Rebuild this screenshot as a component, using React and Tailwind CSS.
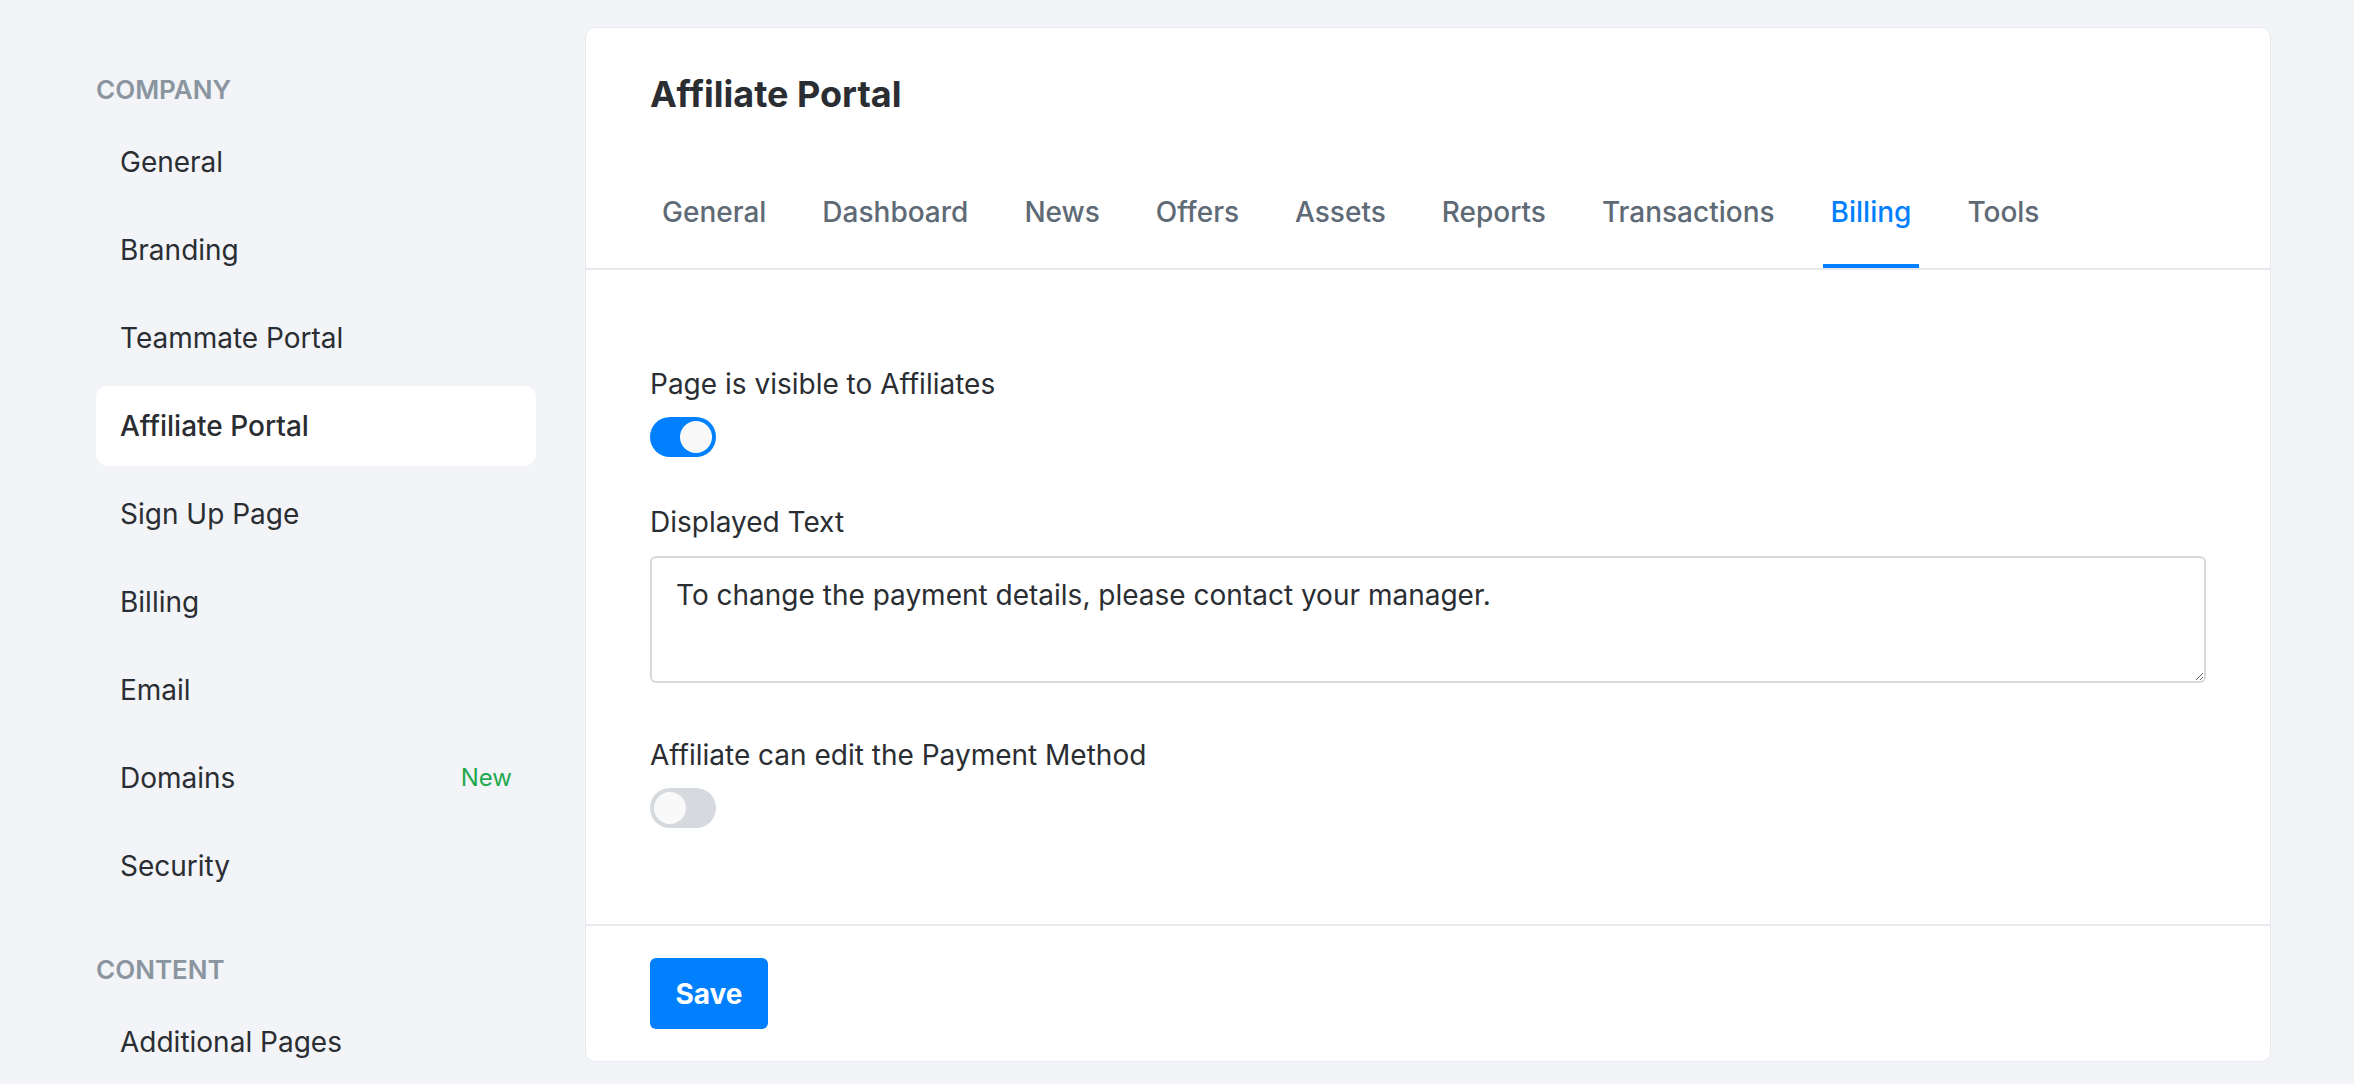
import React from "react";

const company = [
  { label: "General" },
  { label: "Branding" },
  { label: "Teammate Portal" },
  { label: "Affiliate Portal", active: true },
  { label: "Sign Up Page" },
  { label: "Billing" },
  { label: "Email" },
  { label: "Domains", badge: "New" },
  { label: "Security" },
];

const content = [{ label: "Additional Pages" }];

const tabs = ["General", "Dashboard", "News", "Offers", "Assets", "Reports", "Transactions", "Billing", "Tools"];

function NavItem({ item }) {
  return (
    <div
      className={
        "h-[80px] px-[24px] rounded-[12px] flex items-center justify-between text-[28px] leading-[32px] text-[#2a2e33] " +
        (item.active ? "bg-white font-medium" : "")
      }
    >
      <span>{item.label}</span>
      {item.badge && <span className="text-[24px] text-[#22a94f]">{item.badge}</span>}
    </div>
  );
}

function Toggle({ on }) {
  return (
    <div
      className={
        "w-[66px] h-[40px] rounded-full p-[4px] flex " +
        (on ? "bg-[#0080ff] justify-end" : "bg-[#d6dade] justify-start")
      }
    >
      <div className="w-[32px] h-[32px] rounded-full bg-[#f9f9f9]" />
    </div>
  );
}

export default function App() {
  return (
    <div
      className="w-full h-[1084px] bg-[#f2f4f7] flex overflow-hidden"
      style={{ fontFamily: "Inter, 'Noto Sans', sans-serif" }}
    >
      <aside className="pl-[96px] w-[536px] shrink-0 pt-[74px]">
        <div className="text-[26px] leading-[32px] font-semibold text-[#8a959f] uppercase">Company</div>
        <div className="mt-[16px] flex flex-col gap-[8px]">
          {company.map((it) => (
            <NavItem key={it.label} item={it} />
          ))}
        </div>
        <div className="mt-[48px] text-[26px] leading-[32px] font-semibold text-[#8a959f] uppercase">Content</div>
        <div className="mt-[16px] flex flex-col gap-[8px]">
          {content.map((it) => (
            <NavItem key={it.label} item={it} />
          ))}
        </div>
      </aside>

      <main className="flex-1 ml-[49px] mr-[83px] mt-[27px] self-start bg-white border border-[#e7eaee] rounded-[10px]">
        <div className="pt-[44px] px-[64px]">
          <h1 className="text-[36px] leading-[44px] font-bold text-[#2a2d32]">Affiliate Portal</h1>
        </div>
        <div className="mt-[79px] border-b-2 border-[#e6e9ec] pl-[68px] flex gap-[40px]">
          {tabs.map((t) => {
            const active = t === "Billing";
            return (
              <div
                key={t}
                className={
                  "relative px-[8px] pb-[39px] text-[28px] leading-[34px] font-medium " +
                  (active ? "text-[#0080ff]" : "text-[#5e6a75]")
                }
              >
                {t}
                {active && <div className="absolute left-0 right-0 bottom-0 h-[4px] bg-[#0080ff]" />}
              </div>
            );
          })}
        </div>

        <div className="px-[64px] pt-[98px] pb-[96px] text-[28px] leading-[32px] text-[#2a2e33]">
          <div>Page is visible to Affiliates</div>
          <div className="mt-[17px]">
            <Toggle on />
          </div>
          <div className="mt-[49px]">Displayed Text</div>
          <textarea
            className="mt-[18px] block w-full h-[127px] border-2 border-[#d6dadf] rounded-[6px] pt-[21px] px-[24px] text-[28px] leading-[32px] text-[#2a2e33] outline-none"
            defaultValue="To change the payment details, please contact your manager."
          />
          <div className="mt-[56px]">Affiliate can edit the Payment Method</div>
          <div className="mt-[17px]">
            <Toggle on={false} />
          </div>
        </div>

        <div className="border-t-2 border-[#e8ebee] px-[64px] pt-[32px] pb-[32px]">
          <button className="h-[71px] w-[118px] flex items-center justify-center rounded-[6px] bg-[#0080ff] text-white font-bold text-[28px] leading-[34px]">
            Save
          </button>
        </div>
      </main>
    </div>
  );
}
